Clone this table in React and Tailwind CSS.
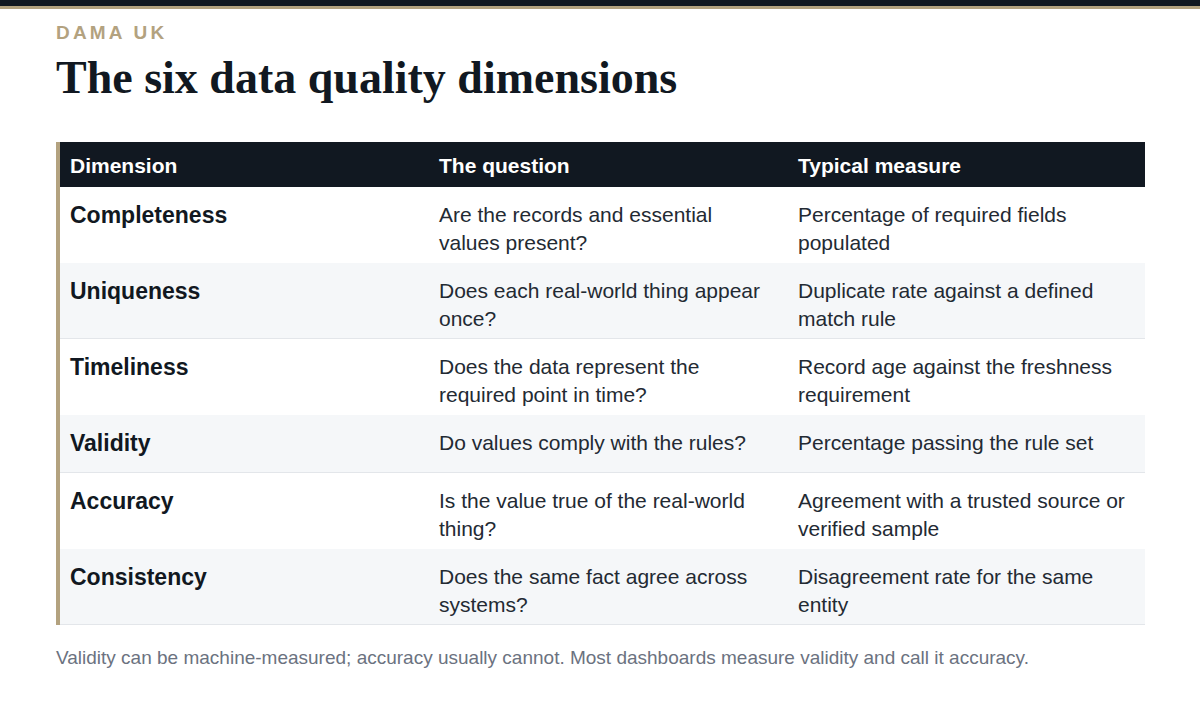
const rows = [
  ['Completeness', 'Are the records and essential values present?', 'Percentage of required fields populated'],
  ['Uniqueness', 'Does each real-world thing appear once?', 'Duplicate rate against a defined match rule'],
  ['Timeliness', 'Does the data represent the required point in time?', 'Record age against the freshness requirement'],
  ['Validity', 'Do values comply with the rules?', 'Percentage passing the rule set'],
  ['Accuracy', 'Is the value true of the real-world thing?', 'Agreement with a trusted source or verified sample'],
  ['Consistency', 'Does the same fact agree across systems?', 'Disagreement rate for the same entity'],
];

export default function App() {
  return (
    <div className="min-h-[728px] w-[1200px] bg-white font-['Liberation_Sans',Arial,sans-serif]">
      {/* top rule */}
      <div className="h-[6px] bg-[#111821]" />
      <div className="h-[3px] bg-[#b3a27f]" />

      <div className="px-[56px] pt-[12px]">
        <div className="text-[19px] leading-[24px] font-bold tracking-[3.2px] text-[#b3a27f]">DAMA UK</div>
        <h1 className="mt-[5px] font-['Liberation_Serif','Times_New_Roman',serif] text-[46px] leading-[55px] font-bold text-[#111821]">
          The six data quality dimensions
        </h1>

        {/* table */}
        <div className="mt-[37px] w-[1089px] border-l-4 border-[#b3a27f]">
          <div className="grid h-[45px] grid-cols-[369px_359px_1fr] items-center bg-[#111821] pt-[3px] text-[21px] leading-[28px] font-bold text-white">
            <div className="pl-[10px]">Dimension</div>
            <div className="pl-[10px]">The question</div>
            <div className="pl-[10px]">Typical measure</div>
          </div>
          {rows.map(([name, question, measure], i) => (
            <div
              key={name}
              className={`grid min-h-[58px] grid-cols-[369px_359px_1fr] items-start border-b pt-[14px] pb-[5px] ${
                i % 2 === 1 ? 'border-[#e3e6ea] bg-[#f5f7f9]' : 'border-white bg-white'
              }`}
            >
              <div className="pl-[10px] text-[23px] leading-[28px] font-bold text-[#111821]">{name}</div>
              <div className="pl-[10px] pr-[16px] text-[21px] leading-[28px] text-[#232a33]">{question}</div>
              <div className="pl-[10px] pr-[16px] text-[21px] leading-[28px] text-[#232a33]">{measure}</div>
            </div>
          ))}
        </div>

        <p className="mt-[20px] text-[19px] leading-[26px] text-[#6b7280]">
          Validity can be machine-measured; accuracy usually cannot. Most dashboards measure validity and call it accuracy.
        </p>
      </div>
    </div>
  );
}
